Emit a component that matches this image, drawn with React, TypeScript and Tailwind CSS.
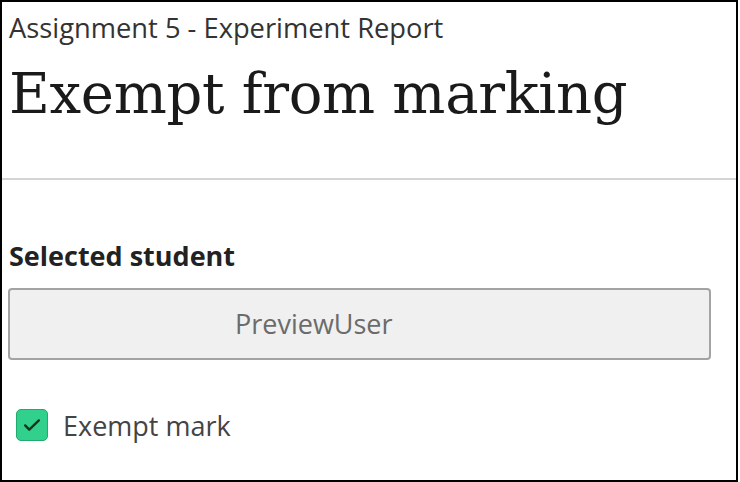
import React from 'react';

const sans = { fontFamily: '"Open Sans", "Noto Sans", sans-serif' };

export default function App() {
  return (
    <div className="w-[740px] h-[482px] bg-white">
      <div
        className="w-[738px] h-[482px] border-2 border-black flex flex-col"
        style={sans}
      >
        <div className="pl-[7px] pt-[10px] h-[176px]">
          <div className="text-[27.3px] leading-[32px] text-[#333]">
            Assignment 5 - Experiment Report
          </div>
          <h1 className="mt-[20px] text-[56px] leading-[60px] text-[#1a1a1a] font-['DejaVu_Serif',serif] tracking-[-0.3px]">
            Exempt from marking
          </h1>
        </div>
        <div className="h-[2px] bg-[#d4d4d4]" />
        <div className="pl-[6px] pr-[25px] pt-[60px]">
          <div className="text-[27px] leading-[32px] font-bold text-[#222] pl-[1px]">
            Selected student
          </div>
          <div className="mt-[16px] h-[72px] rounded-[4px] border-2 border-[#a3a3a3] bg-[#f0f0f0] flex items-center pl-[225px] text-[27px] text-[#6b6b6b]">
            PreviewUser
          </div>
          <label className="mt-[46px] flex items-center gap-[15px] pl-[8px]">
            <span className="w-[32px] h-[32px] rounded-[5px] bg-[#31d08c] border border-[#22a96d] flex items-center justify-center">
              <svg width="22" height="22" viewBox="0 0 24 24" fill="none" stroke="#17331f" strokeWidth="2.6" strokeLinecap="round" strokeLinejoin="round">
                <path d="M4.5 12.5l4.5 4.5L19.5 7" />
              </svg>
            </span>
            <span className="text-[27px] leading-[36px] pt-[2px] text-[#444]">Exempt mark</span>
          </label>
        </div>
      </div>
    </div>
  );
}
